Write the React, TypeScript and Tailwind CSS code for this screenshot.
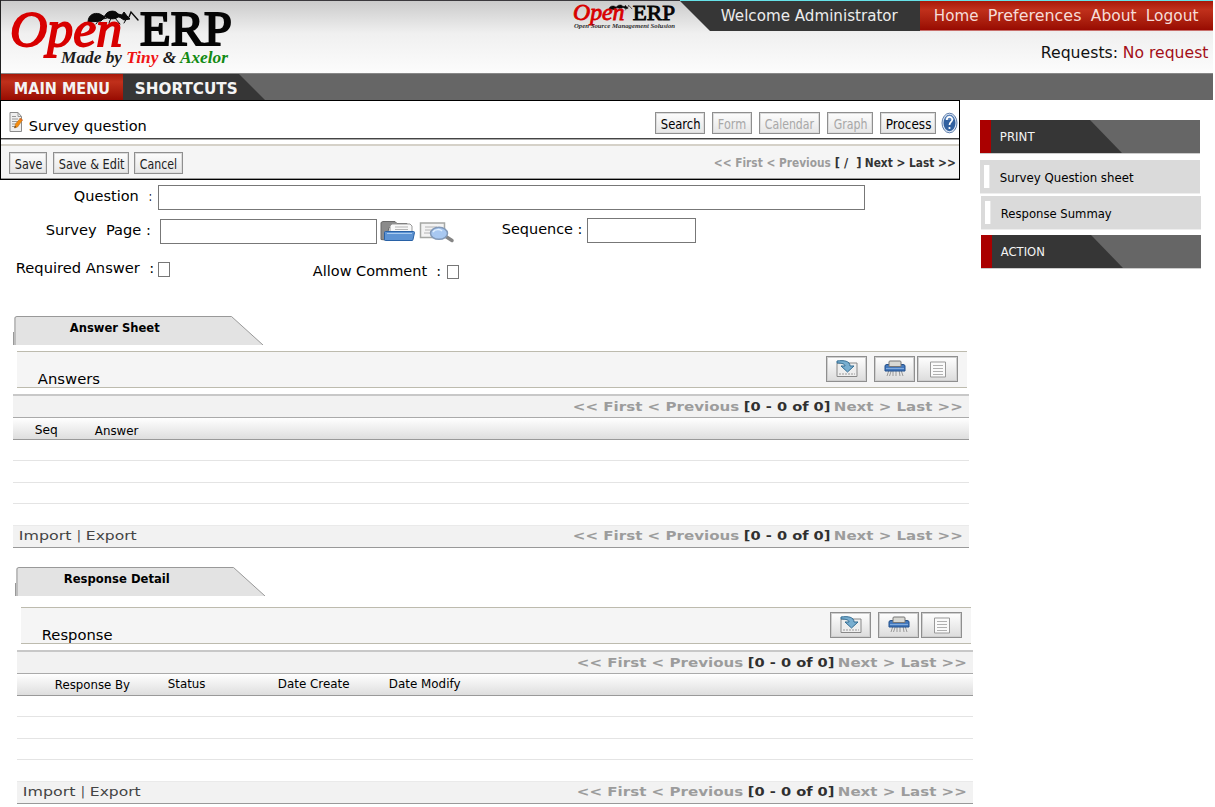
import { useLayoutEffect, useRef } from "react";
import type { ReactNode } from "react";

/* Single line of text stretched or condensed to a given width. */
function T({ w, className = "", children }: { w: number; className?: string; children: ReactNode }) {
  const ref = useRef<HTMLSpanElement>(null);
  useLayoutEffect(() => {
    const el = ref.current;
    if (el) el.style.transform = `translateX(0.8px) scaleX(${(w - 1.6) / el.offsetWidth})`;
  }, [w]);
  return (
    <span className={"block h-5 shrink-0 leading-5 whitespace-pre " + className} style={{ width: w }}>
      <span ref={ref} className="inline-block origin-left">{children}</span>
    </span>
  );
}

function Logo({ className, small = false }: { className: string; small?: boolean }) {
  return (
    <svg className={"overflow-visible " + className} viewBox="0 0 224 60" preserveAspectRatio="none" fontFamily="'Liberation Serif', serif">
      <g fill="#090909" stroke="#090909" strokeLinecap="round">
        <path d="M78 13C78 6 84 3 90 5l5 3-4 4-11 1Z" />
        <path d="M95 7c1-5 10-7 13-2s-9 7-13 2Z" />
        <path d="M108 5l4 1 2-3 3 4 3 3-6 1-6-4Z" />
        <path d="M91 8h22M97 9l-8 2-3 4M101 9l-2 5M105 9l5 6M117 9l-3 5" fill="none" strokeWidth="1" />
        <path d="M119 8l2-5 7 8" fill="none" strokeWidth="1.4" />
      </g>
      <text x="0" y="37" fontSize="51" fontStyle="italic" fill="#d80000" stroke="#d80000" strokeWidth="1.8" textLength="112" lengthAdjust="spacingAndGlyphs">Open</text>
      <text x="130" y="36" fontSize="49" fill="#050505" stroke="#050505" strokeWidth="2" textLength="92" lengthAdjust="spacingAndGlyphs">ERP</text>
      {small ? (
        <text x="2" y="56" fontSize="14.5" fontWeight="bold" fontStyle="italic" fill="#333" textLength="220" lengthAdjust="spacingAndGlyphs">Open Source Management Solusion</text>
      ) : (
        <text x="51" y="54" fontSize="17" fontWeight="bold" fontStyle="italic" fill="#1c1c1c" textLength="167" lengthAdjust="spacingAndGlyphs">
          Made by <tspan fill="#f01414">Tiny</tspan> &amp; <tspan fill="#128a12">Axelor</tspan>
        </text>
      )}
    </svg>
  );
}

function Header() {
  return (
    <header className="h-[100px] w-[1213px] border-l border-[#222]">
      <div className="flex h-[73px] items-start border-t border-[#3b393d] bg-linear-to-b from-[#cbcbcb] via-[#f0f0f0] via-45% to-[#fcfcfc]">
        <Logo className="mt-[8px] ml-[9px] h-[60px] w-[224px] shrink-0" />
        <Logo small className="mt-[3px] ml-[339px] h-[26px] w-[103px] shrink-0" />
        <div className="ml-[4px] flex w-[533px] shrink-0 flex-col">
          <nav className="-mt-px flex h-[31px] border-t border-[#66e2e8] bg-[#363636] text-[15px] text-[#ececec] [clip-path:polygon(0_0,100%_0,100%_100%,30px_100%,0_1px)]">
            <T w={179} className="mt-[5px] ml-[40px]">Welcome Administrator</T>
            <div className="ml-[21px] flex w-[293px] border-b border-[#c8706c] bg-linear-to-b from-[#a81808] via-[#c0301b] via-30% to-[#980a02] pt-[5px] pl-[13px] text-[#f6dcd8]">
              <T w={46}>Home</T>
              <T w={95} className="ml-[8px]">Preferences</T>
              <T w={47} className="ml-[8px]">About</T>
              <T w={54} className="ml-[8px]">Logout</T>
            </div>
          </nav>
          <div className="mt-[12px] flex pl-[360px] text-[15px] text-[#111]">
            <T w={79}>Requests:</T>
            <T w={87} className="ml-[3px] text-[#a30f17]">No request</T>
          </div>
        </div>
      </div>
      <div className="flex h-[27px] border-t border-[#888] bg-[#666] text-[15px] font-bold text-[#f4f4f4]">
        <div className="w-[122px] bg-linear-to-b from-[#a81808] via-[#c0301b] via-30% to-[#980a02] pt-[5px] pl-[12px]">
          <T w={98}>MAIN MENU</T>
        </div>
        <div className="w-[143px] bg-[#363636] pt-[5px] pl-[11px] [clip-path:polygon(0_0,116px_0,142px_100%,0_100%)]">
          <T w={104}>SHORTCUTS</T>
        </div>
      </div>
    </header>
  );
}

function Btn({ w, className = "", children }: { w: number; className?: string; children: string }) {
  return (
    <button className={"flex h-[22px] shrink-0 justify-center border border-[#8f8f8f] bg-linear-to-b from-[#fdfdfd] to-[#e6e6e6] text-[13.5px] shadow-[inset_0_0_0_1px_#dcdcdc] " + className}>
      <T w={w} className="mt-px">{children}</T>
    </button>
  );
}

function NoteIcon() {
  return (
    <svg className="mt-[11px] ml-[8px] h-[20px] w-[14px] shrink-0" viewBox="0 0 14 20">
      <path d="M1 .5h8l3.500 4v15H1Z" fill="#efefef" stroke="#8b8b8b" />
      <path d="M9 .5v4h3.500M3 4.500h4M3 7h6M3 9.500h6M3 12h4M3 14.500h3" fill="none" stroke="#999" />
      <path d="M5.500 16l1-4 5-6 2 2-5 7Z" fill="#f58b0c" stroke="#c07a26" strokeWidth=".7" />
      <path d="M5.500 16l.5-2 1 1Z" fill="#222" />
      <path d="M11 6.500l2 2" stroke="#d24a3a" />
    </svg>
  );
}

function HelpIcon() {
  return (
    <svg className="ml-[5px] h-[22px] w-[17px] shrink-0" viewBox="0 0 17 22">
      <ellipse cx="8.500" cy="11" rx="7.500" ry="9.800" fill="#dfe8f4" stroke="#5d7dab" />
      <ellipse cx="8.500" cy="11" rx="6" ry="8.200" fill="#31609f" />
      <path d="M3.500 8C5 1 12 1 13.500 8Z" fill="#5c84bb" />
      <path d="M5.800 8c0-4 5.500-4 5.500-.5C11.300 10 8.500 10 8.500 13" fill="none" stroke="#fff" strokeWidth="1.700" />
      <circle cx="8.500" cy="16" r="1.100" fill="#fff" />
    </svg>
  );
}

function Toolbar() {
  return (
    <section className="h-[80px] w-[960px] border border-black bg-white">
      <div className="flex h-[38px] border-b border-[#444] shadow-[0_1px_0_#aaa]">
        <NoteIcon />
        <T w={120} className="mt-[15px] ml-[5px] text-[14px]">Survey question</T>
        <div className="mt-[11px] ml-[507px] flex">
          <Btn w={41} className="w-[50px] text-black">Search</Btn>
          <Btn w={30} className="ml-[7px] w-[40px] text-[#a8a8a8]">Form</Btn>
          <Btn w={51} className="ml-[7px] w-[61px] text-[#a8a8a8]">Calendar</Btn>
          <Btn w={35} className="ml-[7px] w-[46px] text-[#a8a8a8]">Graph</Btn>
          <Btn w={47} className="ml-[7px] w-[56px] text-black">Process</Btn>
          <HelpIcon />
        </div>
      </div>
      <div className="mt-[5px] flex h-[35px] border-t-2 border-b border-t-[#d5d1c8] border-b-[#999] bg-[#f5f5f5] pt-[6px] pl-[8px]">
        <Btn w={29} className="w-[38px] from-[#e4e4e4] to-[#d8d8d8] text-[#222]">Save</Btn>
        <Btn w={67} className="ml-[6px] w-[76px] text-[#222]">Save &amp; Edit</Btn>
        <Btn w={39} className="ml-[5px] w-[49px] text-[#222]">Cancel</Btn>
        <div className="mt-px ml-[530px] flex text-[13px] font-bold text-[#333]">
          <T w={119} className="text-[#9c9c9c]">{"<< First < Previous"}</T>
          <T w={28} className="ml-[2px]">{"[ /  ]"}</T>
          <T w={93} className="ml-[2px]">{"Next > Last >>"}</T>
        </div>
      </div>
    </section>
  );
}

function FolderIcon() {
  return (
    <svg className="mt-[3px] ml-[3px] h-[21px] w-[36px] shrink-0" viewBox="0 0 36 21">
      <path d="M1 18.500V1.500l2-1h12l2 2h10v4H9L6 19Z" fill="#8b8b8b" stroke="#696969" />
      <path d="M10 14V5l2-2h18l2 2v9Z" fill="#f8f8f8" stroke="#999" />
      <path d="M15 6h13M15 8.500h13" stroke="#b5b5b5" />
      <path d="M4.500 11.500q0-1 1-1h28q1 0 1 1l-1.500 7q0 1-1 1H5.500q-1 0-1-1Z" fill="#5d93d3" stroke="#2861a6" />
      <path d="M7 12.500h25" stroke="#a9cbef" />
    </svg>
  );
}

function SearchIcon() {
  return (
    <svg className="mt-[4px] ml-[3px] h-[21px] w-[36px] shrink-0" viewBox="0 0 36 21">
      <path d="M1.500 1h24v14.500h-24Z" fill="#f3f3f3" stroke="#a5a7a4" strokeWidth="1.500" />
      <path d="M6 5h12M6 8h8M5 11h6" stroke="#b4b4b4" />
      <path d="M26 14l7 4.500" stroke="#858585" strokeWidth="3.500" strokeLinecap="round" />
      <ellipse cx="20" cy="11.300" rx="8.500" ry="6" fill="#a8c8f1" stroke="#8299b8" strokeWidth="1.500" />
      <path d="M14 10c2-3 7-3 9-1" stroke="#e1f0ff" strokeWidth="1.500" fill="none" />
    </svg>
  );
}

function Form() {
  return (
    <form className="h-[136px] pt-[5px] text-[14px] text-black">
      <div className="flex h-[33px] items-start">
        <T w={67} className="mt-px ml-[73px]">Question</T>
        <T w={5} className="mt-px ml-[8px]">:</T>
        <input className="ml-[5px] h-[25px] w-[707px] border border-[#777]" />
      </div>
      <div className="flex h-[43px] items-start">
        <T w={107} className="mt-[2px] ml-[45px]">{"Survey  Page :"}</T>
        <input className="mt-px ml-[8px] h-[25px] w-[217px] border border-[#777]" />
        <FolderIcon />
        <SearchIcon />
        <T w={82} className="mt-px ml-[46px]">Sequence :</T>
        <input className="ml-[4px] h-[25px] w-[109px] border border-[#777]" />
      </div>
      <div className="flex h-[24px] items-start">
        <T w={140} className="-mt-[3px] ml-[15px]">{"Required Answer  :"}</T>
        <input type="checkbox" className="mt-px ml-[3px] h-[15px] w-[12px] appearance-none border border-[#777]" />
        <T w={130} className="ml-[142px]">{"Allow Comment  :"}</T>
        <input type="checkbox" className="mt-[4px] ml-[5px] h-[14px] w-[12px] appearance-none border border-[#777]" />
      </div>
    </form>
  );
}

function Pager() {
  return (
    <div className="flex text-[11.5px] font-bold text-[#9c9c9c]">
      <T w={168}>{"<< First < Previous"}</T>
      <T w={88} className="ml-[3px] text-[#303030]">[0 - 0 of 0]</T>
      <T w={131} className="ml-[2px]">{"Next > Last >>"}</T>
    </div>
  );
}

function Tab({ label, w, className = "" }: { label: string; w: number; className?: string }) {
  return (
    <div className="relative h-[29px] w-[251px]">
      <svg className="absolute inset-0 h-[29px] w-[251px]" viewBox="0 0 251 29">
        <path d="M1 29V2Q1 .5 3 .5H218.500L250 29Z" fill="#e3e3e3" />
        <path d="M2 29V2Q2 .5 4 .5H218.500L250 29M.5 16v13" fill="none" stroke="#999" />
      </svg>
      <T w={w} className={"relative pt-[2px] text-[12px] font-bold text-black " + className}>{label}</T>
    </div>
  );
}

const toolClass = "flex h-[26px] w-[41px] items-center justify-center border border-[#8f8f8f] bg-linear-to-b from-white to-[#dcdcdc] shadow-[inset_0_0_0_1px_#cfcfcf]";

function GridTools() {
  return (
    <div className="flex">
      <button className={toolClass}>
        <svg className="h-[18px] w-[22px]" viewBox="0 0 22 18">
          <path d="M1 3h20v13.500H1Z" fill="#eee" stroke="#888" />
          <path d="M3 14h16" stroke="#c4c4c4" strokeWidth="2" strokeDasharray="2 1" />
          <path d="M1 1c7-1 13 0 13 5h4l-6.500 6L5 6h4C9 4 6 3 1 3Z" fill="#78aed0" stroke="#326c92" />
        </svg>
      </button>
      <button className={toolClass + " ml-[7px]"}>
        <svg className="h-[18px] w-[22px]" viewBox="0 0 22 18">
          <path d="M5 10l-2 6M7.500 10l-2 6M9 10v6M12 10v6M15 10l1 6M17 10l2 6" stroke="#999" fill="none" />
          <path d="M1 6q0-1.500 2-1.500h16q2 0 2 1.500v5H1Z" fill="#4479bd" stroke="#214e8a" />
          <path d="M2 8.500h18" stroke="#80aadd" />
          <path d="M5 2q0-1 1-1h10q1 0 1 1v4.500H5Z" fill="#d8d8d3" stroke="#777" />
        </svg>
      </button>
      <button className={toolClass + " ml-[2px]"}>
        <svg className="h-[17px] w-[18px]" viewBox="0 0 18 17">
          <path d="M1.500 1h15v15h-15Z" fill="#fafafa" stroke="#999" />
          <path d="M4 4.500h10M4 7.500h10M4 10.500h10M4 13.500h10" stroke="#b0b0b0" />
        </svg>
      </button>
    </div>
  );
}

function Grid({ title, children }: { title: ReactNode; children: ReactNode }) {
  return (
    <section className="w-[956px]">
      <div className="ml-[4px] flex h-[37px] w-[950px] items-start justify-between border-y border-[#bdbbae] bg-[#f5f5f5] pt-[4px] pr-[9px] pl-[20px]">
        {title}
        <GridTools />
      </div>
      <div className="mt-[6px] flex h-[24px] items-start justify-end border-t-2 border-b border-t-[#c8c8c8] border-b-[#aaa] bg-[#f2f2f2] pt-px pr-[5px]">
        <Pager />
      </div>
      <div className="flex h-[22px] border-b border-[#999] bg-linear-to-b from-white to-[#dedede] text-[12px] text-black">
        {children}
      </div>
      <div className="h-[21px] border-b border-[#e4e4e4]" />
      <div className="h-[22px] border-b border-[#e4e4e4]" />
      <div className="h-[21px] border-b border-[#e4e4e4]" />
      <div className="h-[21px]" />
      <div className="flex h-[23px] items-start justify-between border-t border-b border-t-[#eaeaea] border-b-[#999] bg-[#f2f2f2] pr-[5px] pl-[5px] text-[11.5px] text-[#444]">
        <div className="flex">
          <T w={54}>Import</T>
          <T w={6} className="ml-[4px]">|</T>
          <T w={53} className="ml-[3px]">Export</T>
        </div>
        <Pager />
      </div>
    </section>
  );
}

function SideHead({ w, children }: { w: number; children: string }) {
  return (
    <div className="h-[33px] w-[220px] bg-[#666] shadow-[0_1px_0_#ccc]">
      <div className="h-full w-[142px] border-l-[11px] border-[#aa0000] bg-[#363636] pt-[7px] pl-[8px] text-[#f4f4f4] [clip-path:polygon(0_0,110px_0,142px_100%,0_100%)]">
        <T w={w}>{children}</T>
      </div>
    </div>
  );
}

function SideItem({ w, className = "", children }: { w: number; className?: string; children: string }) {
  return (
    <div className={"flex h-[33px] w-[220px] bg-[#dadada] pl-[4px] shadow-[0_1px_0_#eee] " + className}>
      <span className="mt-[5px] h-[23px] w-[5px] bg-white shadow-[1px_0_0_#e8e8e8]" />
      <T w={w} className="mt-[8px] ml-[10px]">{children}</T>
    </div>
  );
}

export default function App() {
  return (
    <div className="h-[807px] w-[1215px] overflow-hidden bg-white font-['DejaVu_Sans',sans-serif]">
      <Header />
      <div className="flex items-start">
        <main className="w-[980px] shrink-0">
          <Toolbar />
          <Form />
          <div className="ml-[13px]"><Tab label="Answer Sheet" w={92} className="ml-[56px]" /></div>
          <div className="mt-[6px] ml-[13px]">
            <Grid title={<T w={64} className="mt-[13px] text-[14px]">Answers</T>}>
              <T w={25} className="mt-[2px] ml-[21px]">Seq</T>
              <T w={45} className="mt-[3px] ml-[35px]">Answer</T>
            </Grid>
          </div>
          <div className="mt-[19px] ml-[15px]"><Tab label="Response Detail" w={108} className="ml-[48px]" /></div>
          <div className="mt-[11px] ml-[17px]">
            <Grid title={<T w={72} className="mt-[13px] text-[14px]">Response</T>}>
              <T w={77} className="mt-px ml-[37px]">Response By</T>
              <T w={39} className="ml-[36px]">Status</T>
              <T w={73} className="ml-[71px]">Date Create</T>
              <T w={73} className="ml-[38px]">Date Modify</T>
            </Grid>
          </div>
        </main>
        <aside className="mt-[20px] text-[12px] text-black">
          <SideHead w={36}>PRINT</SideHead>
          <SideItem w={135} className="mt-[7px]">Survey Question sheet</SideItem>
          <div className="ml-px">
            <SideItem w={113} className="mt-[3px]">Response Summay</SideItem>
            <div className="mt-[6px]"><SideHead w={46}>ACTION</SideHead></div>
          </div>
        </aside>
      </div>
    </div>
  );
}
